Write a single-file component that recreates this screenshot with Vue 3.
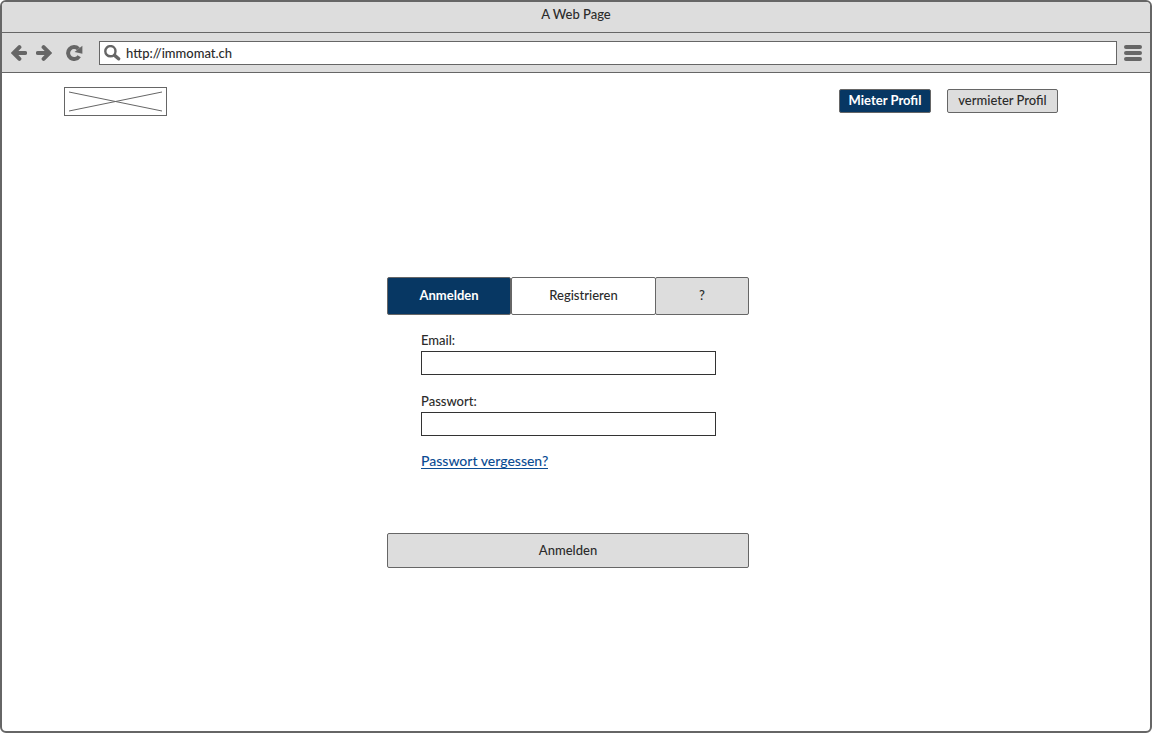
<script setup>
import { ref } from 'vue'

const address = ref('http://immomat.ch')
const email = ref('')
const password = ref('')
const tab = ref('login')
</script>

<template>
  <div class="window">
    <header class="title">A Web Page</header>
    <nav class="toolbar" aria-label="Browser">
      <button class="icon" type="button" aria-label="Back">
        <svg width="16" height="16" viewBox="0 0 16 16"><path d="M8.4 2.2 2.6 8 8.4 13.8M3 8h11.2" /></svg>
      </button>
      <button class="icon forward" type="button" aria-label="Forward">
        <svg width="16" height="16" viewBox="0 0 16 16"><path d="M7.6 2.2 13.4 8 7.6 13.8M13 8H1.8" /></svg>
      </button>
      <button class="icon reload" type="button" aria-label="Reload">
        <svg width="17" height="16" viewBox="0 0 17 16">
          <path class="arc" d="M12.4 3.8A6 6 0 1 0 13.2 11.2" />
          <path class="head" d="M16.4.8v8L8.6 7z" />
        </svg>
      </button>
      <div class="address">
        <svg width="17" height="16" viewBox="0 0 17 16">
          <circle cx="6.4" cy="6.2" r="5.1" />
          <path class="handle" d="m10.6 10.4 4 3.4" />
        </svg>
        <input v-model="address" type="text" aria-label="Address" />
      </div>
      <button class="icon menu" type="button" aria-label="Menu">
        <svg width="18" height="16" viewBox="0 0 18 16"><path d="M2 2h14M2 8h14M2 14h14" /></svg>
      </button>
    </nav>

    <div class="page">
      <div class="site-head">
        <svg class="logo" width="103" height="29" viewBox="0 0 103 29" role="img" aria-label="Logo">
          <rect x="0.5" y="0.5" width="102" height="28" />
          <path d="M5 5 98 24M5 24 98 5" />
        </svg>
        <div class="profiles">
          <button class="btn active tenant" type="button">Mieter Profil</button>
          <button class="btn landlord" type="button">vermieter Profil</button>
        </div>
      </div>

      <main class="panel">
        <div class="tabs">
          <button class="btn login" :class="{ active: tab === 'login' }" type="button" @click="tab = 'login'">Anmelden</button>
          <button class="btn register" :class="{ active: tab === 'register' }" type="button" @click="tab = 'register'">Registrieren</button>
          <button class="btn help" type="button">?</button>
        </div>
        <form @submit.prevent>
          <div class="fields">
            <label for="email">Email:</label>
            <input id="email" v-model="email" type="email" />
            <label for="password">Passwort:</label>
            <input id="password" v-model="password" type="password" />
            <a href="#">Passwort vergessen?</a>
          </div>
          <button class="btn submit" type="submit">Anmelden</button>
        </form>
      </main>
    </div>
  </div>
</template>

<style>
body {
  background: #fff;
}
</style>

<style scoped>
.window,
.window * {
  box-sizing: border-box;
}

.window {
  display: flex;
  flex-direction: column;
  min-height: 100vh;
  border: 2px solid #666;
  border-radius: 6px;
  background: #fff;
  overflow: hidden;
  color: #2b2b2b;
  font-family: Lato, "Liberation Sans", sans-serif;
  font-size: 13px;
  font-weight: 500;
  line-height: 16px;
}

button,
input {
  font: inherit;
  color: inherit;
  padding: 0;
  margin: 0;
}

.title {
  height: 31px;
  padding-top: 4px;
  text-align: center;
  background: #ddd;
  border-bottom: 1px solid #666;
}

.toolbar {
  display: flex;
  align-items: center;
  height: 40px;
  padding: 0 8px 0 9px;
  background: #ddd;
  border-bottom: 1px solid #666;
}

.icon {
  display: flex;
  border: 0;
  background: none;
}

.icon path {
  fill: none;
  stroke: #666;
  stroke-width: 4;
  stroke-linecap: round;
}

.icon .arc {
  stroke-linecap: butt;
}

.icon .head {
  fill: #666;
  stroke: none;
}

.forward {
  margin-left: 9px;
}

.reload {
  margin: 0 16px 0 14px;
}

.address {
  display: flex;
  flex: 1;
  align-items: center;
  gap: 5px;
  height: 24px;
  padding-left: 4px;
  margin-right: 7px;
  background: #fff;
  border: 1px solid #666;
}

.address svg {
  fill: none;
  stroke: #666;
  stroke-width: 2.4;
}

.address .handle {
  stroke-width: 3.4;
  stroke-linecap: round;
}

.address input {
  flex: 1;
  min-width: 0;
  border: 0;
  outline: 0;
  background: none;
}

.page {
  display: flex;
  flex: 1;
  flex-direction: column;
}

.site-head {
  display: flex;
  justify-content: space-between;
  padding: 14px 92px 0 62px;
}

.logo {
  fill: none;
  stroke: #666;
}

.profiles {
  display: flex;
  gap: 16px;
  padding-top: 2px;
}

.btn {
  height: 24px;
  padding-bottom: 2px;
  border: 1px solid #666;
  border-radius: 2px;
  background: #ddd;
}

.btn.active {
  background: #073763;
  color: #fff;
  font-weight: 700;
}

.tenant {
  width: 92px;
}

.landlord {
  width: 111px;
}

.panel {
  width: 362px;
  margin: 161px auto 0;
  translate: -8px;
}

.tabs {
  display: flex;
}

.tabs .btn {
  height: 38px;
}

.tabs .login {
  width: 124px;
}

.tabs .register {
  flex: 1;
}

.register:not(.active) {
  background: #fff;
}

.tabs .help {
  width: 94px;
  margin-left: -1px;
}

.fields {
  display: flex;
  flex-direction: column;
  align-items: flex-start;
  padding: 17px 33px 0 34px;
}

.fields label {
  margin-bottom: 3px;
}

.fields input {
  width: 100%;
  height: 24px;
  padding: 0 4px;
  margin-bottom: 18px;
  border: 1px solid #333;
  background: #fff;
}

.fields a {
  font-size: 14px;
  line-height: 14px;
  color: #0b4c93;
  text-decoration: none;
  border-bottom: 1px solid #0b4c93;
}

.submit {
  width: 100%;
  height: 35px;
  margin-top: 64px;
}
</style>
